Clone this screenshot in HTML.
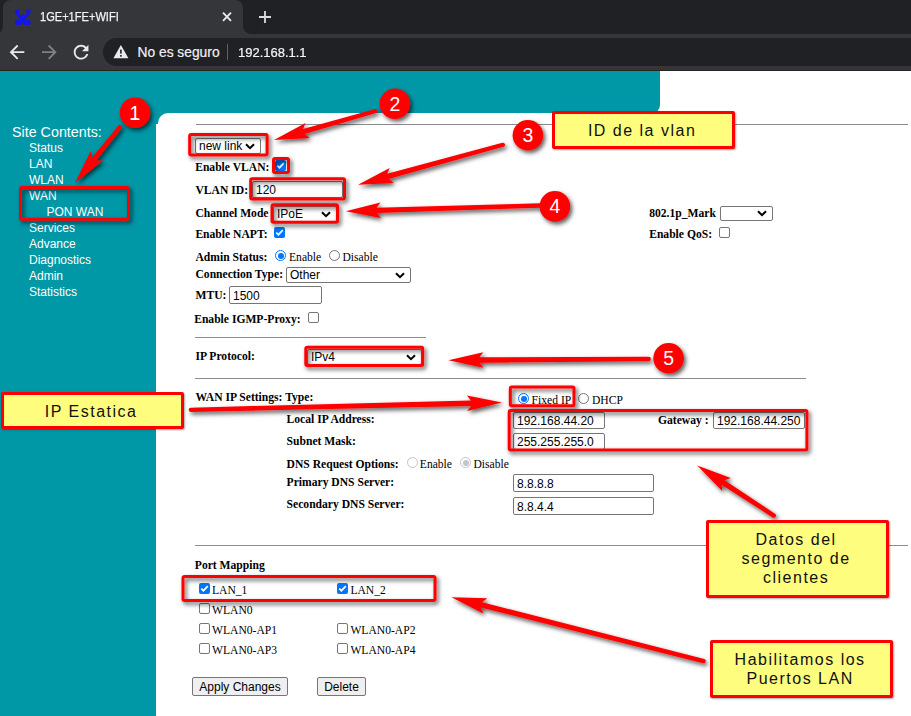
<!DOCTYPE html><html><head><meta charset="utf-8"><style>
*{margin:0;padding:0;box-sizing:border-box}
html,body{width:911px;height:716px;overflow:hidden;background:#fff}
body{position:relative;font-family:"Liberation Serif",serif;color:#000}
.a{position:absolute;white-space:nowrap}
.sans{font-family:"Liberation Sans",sans-serif}
.lb{position:absolute;white-space:nowrap;font-family:"Liberation Serif",serif;font-weight:bold;font-size:11.6px;line-height:14px}
.rg{position:absolute;white-space:nowrap;font-family:"Liberation Serif",serif;font-size:11.6px;line-height:14px}
.inp{position:absolute;background:#fff;border:1px solid #767676;border-radius:2px;font-family:"Liberation Sans",sans-serif;font-size:12px;padding-left:3px;color:#000;white-space:nowrap}
.sel{position:absolute;background:#fff;border:1px solid #767676;border-radius:2px;font-family:"Liberation Sans",sans-serif;font-size:12px;padding-left:3px;color:#000;white-space:nowrap}

.cb{position:absolute;width:11px;height:11px;border:1px solid #767676;border-radius:2px;background:#fff}
.cbon{position:absolute;width:11px;height:11px;border-radius:2px;background:#0075ff}
.cbon svg{position:absolute;left:0;top:0}
.rd{position:absolute;width:11px;height:11px;border:1px solid #767676;border-radius:50%;background:#fff}
.rdon{position:absolute;width:11px;height:11px;border:1px solid #0075ff;border-radius:50%;background:#fff}
.rdon:after{content:"";position:absolute;left:1.5px;top:1.5px;width:6px;height:6px;border-radius:50%;background:#0075ff}
.hr{position:absolute;height:1px;background:#8c8c8c}
.btn{position:absolute;background:#efefef;border:1px solid #767676;border-radius:2px;font-family:"Liberation Sans",sans-serif;font-size:12px;text-align:center;white-space:nowrap}
.side{font-family:"Liberation Sans",sans-serif;font-size:12px;color:#fff;position:absolute;white-space:nowrap;line-height:14px}
.callout{position:absolute;background:#fefd7d;border:3px solid #f00;border-radius:2px;font-family:"Liberation Sans",sans-serif;font-size:16px;letter-spacing:1.25px;text-align:center;color:#000;box-shadow:1px 1px 2px rgba(0,0,0,.35)}
</style></head><body>
<div class="a" style="left:0;top:0;width:911px;height:34px;background:#202124"></div>
<div class="a" style="left:-5px;top:26px;width:8px;height:8px;background:#35363a"></div>
<div class="a" style="left:-13px;top:18px;width:16px;height:16px;border-radius:50%;background:#202124"></div>
<div class="a" style="left:243px;top:26px;width:8px;height:8px;background:#35363a"></div>
<div class="a" style="left:243px;top:18px;width:16px;height:16px;border-radius:50%;background:#202124"></div>
<div class="a" style="left:3px;top:0;width:240px;height:34px;background:#35363a;border-radius:8px 8px 0 0"></div>
<div class="a" style="left:0;top:34px;width:911px;height:36px;background:#35363a"></div>
<div class="a" style="left:0;top:70px;width:911px;height:1px;background:#2a2220"></div>
<div class="a" style="left:103px;top:38px;width:840px;height:28px;background:#202124;border-radius:14px"></div>
<div class="a sans" style="left:39.5px;top:8.5px;font-size:12.8px;line-height:16px;color:#f1f3f4;-webkit-text-stroke:0.25px #f1f3f4;transform-origin:0 0;transform:scaleX(0.865)">1GE+1FE+WIFI</div>
<div class="a sans" style="left:137.5px;top:45px;font-size:13.8px;line-height:16px;color:#eef0f2;-webkit-text-stroke:0.2px #eef0f2">No es seguro</div>
<div class="a" style="left:227px;top:44px;width:1px;height:16px;background:#5f6368"></div>
<div class="a sans" style="left:237.5px;top:44.5px;font-size:13.6px;line-height:16px;color:#f4f5f6;-webkit-text-stroke:0.2px #f4f5f6;transform-origin:0 0;transform:scaleX(0.955)">192.168.1.1</div>
<svg class="a" style="left:0;top:0" width="300" height="70" viewBox="0 0 300 70"><g transform="translate(14.8,9.9)" fill="none" stroke="#1414f0" stroke-width="2.3" stroke-linecap="round" stroke-linejoin="round"><path d="M1.2 0.8 L2.2 3.6 L8 10.6 L13.8 3.6 L14.8 0.8 M3.6 0.8 L2.6 3.2 M12.4 0.8 L13.4 3.2"/></g><g transform="translate(14.8,9.9)" fill="#1414f0"><rect x="6.2" y="4.6" width="4.2" height="3.8" rx="1"/><rect x="0.4" y="10" width="7.2" height="5" rx="1.8"/><rect x="8.6" y="10" width="7.2" height="5" rx="1.8"/><rect x="7.4" y="7" width="1.8" height="0.8" fill="#35363a"/></g><path d="M223 12.6 L231 20.8 M231 12.6 L223 20.8" stroke="#e8eaed" stroke-width="1.9"/><path d="M265 11 V23 M259 17 H271" stroke="#dadce0" stroke-width="1.8"/><g transform="translate(6,41.2) scale(0.9167)"><path fill="#e8eaed" d="M20 11H7.83l5.59-5.59L12 4l-8 8 8 8 1.41-1.41L7.83 13H20v-2z"/></g><g transform="translate(38.3,41.2) scale(0.9167)"><path fill="#808184" d="M12 4l-1.41 1.41L16.17 11H4v2h12.17l-5.58 5.59L12 20l8-8z"/></g><g transform="translate(70.1,41.2) scale(0.9167)"><path fill="#e8eaed" d="M17.65 6.35C16.2 4.9 14.21 4 12 4c-4.42 0-7.99 3.58-7.99 8s3.57 8 7.99 8c3.73 0 6.840-2.55 7.73-6h-2.08c-.82 2.33-3.04 4-5.65 4-3.31 0-6-2.69-6-6s2.69-6 6-6c1.66 0 3.14.69 4.22 1.78L13 11h7V4l-2.35 2.35z"/></g><path d="M120.9 45 L128.4 58.3 L113.4 58.3 Z" fill="#e8eaed"/><rect x="120.1" y="49.6" width="1.6" height="4" fill="#202124"/><rect x="120.1" y="55" width="1.6" height="1.7" fill="#202124"/></svg>
<div class="a" style="left:0;top:71px;width:156px;height:645px;background:#0097a7"></div>
<div class="a" style="left:0;top:71px;width:660px;height:42px;background:#0097a7;border-radius:0 0 8px 0"></div>
<div class="a" style="left:156px;top:111px;width:12px;height:13px;background:#0097a7"></div>
<div class="a" style="left:158px;top:113px;width:20px;height:20px;background:#fff;border-radius:10px 0 0 0"></div>
<div class="side" style="left:12px;top:124px;font-size:14.3px;line-height:16px">Site Contents:</div>
<div class="side" style="left:29px;top:140.5px;font-size:12px">Status</div>
<div class="side" style="left:29px;top:156.5px;font-size:12px">LAN</div>
<div class="side" style="left:29px;top:172.5px;font-size:12px">WLAN</div>
<div class="side" style="left:29px;top:188.5px;font-size:12px">WAN</div>
<div class="side" style="left:46.5px;top:204.5px;font-size:12px">PON WAN</div>
<div class="side" style="left:29px;top:220.5px;font-size:12px">Services</div>
<div class="side" style="left:29px;top:236.5px;font-size:12px">Advance</div>
<div class="side" style="left:29px;top:252.5px;font-size:12px">Diagnostics</div>
<div class="side" style="left:29px;top:268.5px;font-size:12px">Admin</div>
<div class="side" style="left:29px;top:284.5px;font-size:12px">Statistics</div>
<div class="hr" style="left:196px;top:124px;width:712px"></div>
<div class="sel" style="left:195px;top:138px;width:66px;height:16px;line-height:14px">new link<span style="position:absolute;right:5px;top:3.5px;line-height:0"><svg width="10" height="7" viewBox="0 0 10 7"><path d="M1 1.2 L5 5.2 L9 1.2" fill="none" stroke="#000" stroke-width="2"/></svg></span></div>
<div class="lb" style="left:195.2px;top:161px">Enable VLAN:</div>
<div class="cbon" style="left:275px;top:160px"><svg width="11" height="11" viewBox="0 0 11 11"><path d="M2.3 5.6 L4.4 7.7 L8.8 3.2" fill="none" stroke="#fff" stroke-width="1.7"/></svg></div>
<div class="lb" style="left:195.5px;top:184px">VLAN ID:</div>
<div class="inp" style="left:252px;top:181px;width:91px;height:17px;line-height:15px"><span style="position:relative;top:1px">120</span></div>
<div class="lb" style="left:195.4px;top:207px">Channel Mode</div>
<div class="sel" style="left:273px;top:206px;width:64px;height:16px;line-height:14px">IPoE<span style="position:absolute;right:5px;top:3.5px;line-height:0"><svg width="10" height="7" viewBox="0 0 10 7"><path d="M1 1.2 L5 5.2 L9 1.2" fill="none" stroke="#000" stroke-width="2"/></svg></span></div>
<div class="lb" style="left:195.4px;top:228px">Enable NAPT:</div>
<div class="cbon" style="left:274px;top:227px"><svg width="11" height="11" viewBox="0 0 11 11"><path d="M2.3 5.6 L4.4 7.7 L8.8 3.2" fill="none" stroke="#fff" stroke-width="1.7"/></svg></div>
<div class="lb" style="left:195.5px;top:251px">Admin Status:</div>
<div class="rdon" style="left:275px;top:250px"></div>
<div class="rg" style="left:289px;top:251px">Enable</div>
<div class="rd" style="left:329px;top:250px"></div>
<div class="rg" style="left:342.5px;top:251px">Disable</div>
<div class="lb" style="left:195.5px;top:268px">Connection Type:</div>
<div class="sel" style="left:286px;top:267px;width:125px;height:16px;line-height:14px">Other<span style="position:absolute;right:5px;top:3.5px;line-height:0"><svg width="10" height="7" viewBox="0 0 10 7"><path d="M1 1.2 L5 5.2 L9 1.2" fill="none" stroke="#000" stroke-width="2"/></svg></span></div>
<div class="lb" style="left:195.5px;top:289px">MTU:</div>
<div class="inp" style="left:229px;top:286px;width:93px;height:18px;line-height:16px"><span style="position:relative;top:1px">1500</span></div>
<div class="lb" style="left:194.2px;top:313px">Enable IGMP-Proxy:</div>
<div class="cb" style="left:308px;top:312px"></div>
<div class="lb" style="left:649.2px;top:207px">802.1p_Mark</div>
<div class="sel" style="left:720px;top:206px;width:53px;height:15px;line-height:13px"><span style="position:absolute;right:5px;top:3.0px;line-height:0"><svg width="10" height="7" viewBox="0 0 10 7"><path d="M1 1.2 L5 5.2 L9 1.2" fill="none" stroke="#000" stroke-width="2"/></svg></span></div>
<div class="lb" style="left:649.2px;top:228px">Enable QoS:</div>
<div class="cb" style="left:719px;top:227px"></div>
<div class="hr" style="left:195px;top:337px;width:231px"></div>
<div class="lb" style="left:195.5px;top:350px">IP Protocol:</div>
<div class="sel" style="left:307px;top:349px;width:115px;height:16px;line-height:14px">IPv4<span style="position:absolute;right:5px;top:3.5px;line-height:0"><svg width="10" height="7" viewBox="0 0 10 7"><path d="M1 1.2 L5 5.2 L9 1.2" fill="none" stroke="#000" stroke-width="2"/></svg></span></div>
<div class="hr" style="left:195px;top:378px;width:611px"></div>
<div class="lb" style="left:195.5px;top:391px">WAN IP Settings: Type:</div>
<div class="rdon" style="left:518px;top:393px"></div>
<div class="rg" style="left:531.6px;top:394px">Fixed IP</div>
<div class="rd" style="left:578px;top:393px"></div>
<div class="rg" style="left:592px;top:394px">DHCP</div>
<div class="lb" style="left:286.6px;top:413px">Local IP Address:</div>
<div class="inp" style="left:513px;top:412px;width:92px;height:17px;line-height:15px"><span style="position:relative;top:1px">192.168.44.20</span></div>
<div class="lb" style="left:658px;top:414px">Gateway :</div>
<div class="inp" style="left:713px;top:412px;width:92px;height:17px;line-height:15px"><span style="position:relative;top:1px">192.168.44.250</span></div>
<div class="lb" style="left:286.6px;top:435px">Subnet Mask:</div>
<div class="inp" style="left:513px;top:433px;width:92px;height:17px;line-height:15px"><span style="position:relative;top:1px">255.255.255.0</span></div>
<div class="lb" style="left:286.6px;top:458px">DNS Request Options:</div>
<div class="rd" style="left:407px;top:457px;border-color:#c5c5c5"></div>
<div class="rg" style="left:419.8px;top:458px">Enable</div>
<div class="rd" style="left:460px;top:457px;border-color:#c5c5c5;background:#fff"><div style="position:absolute;left:1.5px;top:1.5px;width:6px;height:6px;border-radius:50%;background:#c5c5c5"></div></div>
<div class="rg" style="left:473.5px;top:458px">Disable</div>
<div class="lb" style="left:286.6px;top:476px">Primary DNS Server:</div>
<div class="inp" style="left:513px;top:474px;width:141px;height:18px;line-height:16px"><span style="position:relative;top:1px">8.8.8.8</span></div>
<div class="lb" style="left:286.6px;top:498px">Secondary DNS Server:</div>
<div class="inp" style="left:513px;top:497px;width:141px;height:18px;line-height:16px"><span style="position:relative;top:1px">8.8.4.4</span></div>
<div class="hr" style="left:195px;top:545px;width:713px"></div>
<div class="lb" style="left:194.8px;top:559px">Port Mapping</div>
<div class="cbon" style="left:199px;top:583px"><svg width="11" height="11" viewBox="0 0 11 11"><path d="M2.3 5.6 L4.4 7.7 L8.8 3.2" fill="none" stroke="#fff" stroke-width="1.7"/></svg></div>
<div class="rg" style="left:212px;top:584px">LAN_1</div>
<div class="cbon" style="left:337px;top:583px"><svg width="11" height="11" viewBox="0 0 11 11"><path d="M2.3 5.6 L4.4 7.7 L8.8 3.2" fill="none" stroke="#fff" stroke-width="1.7"/></svg></div>
<div class="rg" style="left:350.4px;top:584px">LAN_2</div>
<div class="cb" style="left:199px;top:603px"></div>
<div class="rg" style="left:212px;top:604px">WLAN0</div>
<div class="cb" style="left:199px;top:623px"></div>
<div class="rg" style="left:212px;top:624px">WLAN0-AP1</div>
<div class="cb" style="left:337px;top:623px"></div>
<div class="rg" style="left:350.4px;top:624px">WLAN0-AP2</div>
<div class="cb" style="left:199px;top:643px"></div>
<div class="rg" style="left:212px;top:644px">WLAN0-AP3</div>
<div class="cb" style="left:337px;top:643px"></div>
<div class="rg" style="left:350.4px;top:644px">WLAN0-AP4</div>
<div class="btn" style="left:192px;top:677px;width:96px;height:19px;line-height:18px">Apply Changes</div>
<div class="btn" style="left:317px;top:677px;width:49px;height:19px;line-height:18px">Delete</div>
<svg class="a" style="left:0;top:0" width="911" height="716" viewBox="0 0 911 716">
<defs><filter id="sh" x="-30%" y="-30%" width="160%" height="160%"><feDropShadow dx="2" dy="2.5" stdDeviation="2" flood-color="#000" flood-opacity="0.65"/></filter></defs>
<g filter="url(#sh)">
<rect x="20.5" y="187.5" width="108.0" height="31.7" rx="1.5" fill="none" stroke="#f00" stroke-width="3"/>
<rect x="189.7" y="134.5" width="77.4" height="20.5" rx="1.5" fill="none" stroke="#f00" stroke-width="3"/>
<rect x="273.5" y="158.5" width="15.0" height="14.0" rx="1.5" fill="none" stroke="#f00" stroke-width="3"/>
<rect x="250.7" y="178.8" width="93.8" height="20.3" rx="1.5" fill="none" stroke="#f00" stroke-width="3"/>
<rect x="272.0" y="204.7" width="65.5" height="17.6" rx="1.5" fill="none" stroke="#f00" stroke-width="3"/>
<rect x="305.8" y="347.2" width="116.9" height="18.4" rx="1.5" fill="none" stroke="#f00" stroke-width="3"/>
<rect x="510.3" y="387.0" width="63.7" height="18.8" rx="1.5" fill="none" stroke="#f00" stroke-width="3"/>
<rect x="509.2" y="410.5" width="297.7" height="39.6" rx="1.5" fill="none" stroke="#f00" stroke-width="3"/>
<rect x="183.0" y="576.5" width="252.0" height="24.0" rx="1.5" fill="none" stroke="#f00" stroke-width="3"/>
<path d="M118.32 125.65 L92.31 157.14 L90.84 150.83 L75.00 183.00 L103.00 160.60 L96.52 160.53 L121.68 128.35 A2.15 2.15 0 0 0 118.32 125.65 Z" fill="#f00"/>
<path d="M374.41 109.23 L303.08 128.93 L305.54 122.93 L274.00 140.00 L309.80 137.94 L304.56 134.12 L375.59 113.37 A2.15 2.15 0 0 0 374.41 109.23 Z" fill="#f00"/>
<path d="M502.43 142.73 L387.17 173.87 L389.68 167.89 L358.00 184.70 L393.82 182.93 L388.61 179.08 L503.57 146.87 A2.15 2.15 0 0 0 502.43 142.73 Z" fill="#f00"/>
<path d="M539.74 203.35 L376.61 207.68 L380.45 202.46 L345.70 211.30 L380.92 218.05 L376.77 213.07 L539.86 207.65 A2.15 2.15 0 0 0 539.74 203.35 Z" fill="#f00"/>
<path d="M648.69 356.85 L479.38 357.31 L483.35 352.19 L448.40 360.20 L483.45 367.79 L479.42 362.71 L648.71 361.15 A2.15 2.15 0 0 0 648.69 356.85 Z" fill="#f00"/>
<path d="M190.85 411.95 L471.07 405.93 L467.19 411.12 L502.00 402.50 L466.83 395.52 L470.95 400.53 L190.75 407.65 A2.15 2.15 0 0 0 190.85 411.95 Z" fill="#f00"/>
<path d="M774.98 513.80 L724.61 480.13 L730.75 478.06 L697.20 465.40 L722.20 491.11 L721.65 484.65 L772.62 517.40 A2.15 2.15 0 0 0 774.98 513.80 Z" fill="#f00"/>
<path d="M704.23 659.12 L482.11 602.29 L487.24 598.33 L451.40 597.30 L483.41 613.45 L480.79 607.53 L703.17 663.28 A2.15 2.15 0 0 0 704.23 659.12 Z" fill="#f00"/>
<circle cx="135" cy="112.8" r="15.3" fill="#f00"/>
<circle cx="394.9" cy="103.7" r="15.3" fill="#f00"/>
<circle cx="527.9" cy="135.2" r="15.3" fill="#f00"/>
<circle cx="554.9" cy="206.4" r="15.3" fill="#f00"/>
<circle cx="668.6" cy="358.2" r="15.3" fill="#f00"/>
</g>
<text x="135" y="119.8" text-anchor="middle" font-family="Liberation Sans" font-size="19.5" fill="#fff">1</text>
<text x="394.9" y="110.7" text-anchor="middle" font-family="Liberation Sans" font-size="19.5" fill="#fff">2</text>
<text x="527.9" y="142.2" text-anchor="middle" font-family="Liberation Sans" font-size="19.5" fill="#fff">3</text>
<text x="554.9" y="213.4" text-anchor="middle" font-family="Liberation Sans" font-size="19.5" fill="#fff">4</text>
<text x="668.6" y="365.2" text-anchor="middle" font-family="Liberation Sans" font-size="19.5" fill="#fff">5</text>
<rect x="130.6" y="118.2" width="7.4" height="1.7" fill="#fff"/>
</svg>
<div class="callout" style="left:552px;top:111px;width:183px;height:38px"></div>
<div class="a sans" style="left:550.6px;width:183px;top:120.7px;height:19px;line-height:19px;font-size:16px;letter-spacing:1.5px;text-align:center;color:#111">ID de la vlan</div>
<div class="callout" style="left:1px;top:392px;width:183px;height:37px"></div>
<div class="a sans" style="left:-0.4px;width:183px;top:401.8px;height:19px;line-height:19px;font-size:16px;letter-spacing:1.5px;text-align:center;color:#111">IP Estatica</div>
<div class="callout" style="left:706px;top:520px;width:183px;height:78px"></div>
<div class="a sans" style="left:704.6px;width:183px;top:529.5px;height:19px;line-height:19px;font-size:16px;letter-spacing:1.5px;text-align:center;color:#111">Datos del</div>
<div class="a sans" style="left:704.6px;width:183px;top:548.5px;height:19px;line-height:19px;font-size:16px;letter-spacing:1.5px;text-align:center;color:#111">segmento de</div>
<div class="a sans" style="left:704.6px;width:183px;top:567.5px;height:19px;line-height:19px;font-size:16px;letter-spacing:1.5px;text-align:center;color:#111">clientes</div>
<div class="callout" style="left:710px;top:640px;width:183px;height:58.39999999999998px"></div>
<div class="a sans" style="left:708.6px;width:183px;top:649.7px;height:19px;line-height:19px;font-size:16px;letter-spacing:1.5px;text-align:center;color:#111">Habilitamos los</div>
<div class="a sans" style="left:708.6px;width:183px;top:668.9px;height:19px;line-height:19px;font-size:16px;letter-spacing:1.5px;text-align:center;color:#111">Puertos LAN</div>
</body></html>
